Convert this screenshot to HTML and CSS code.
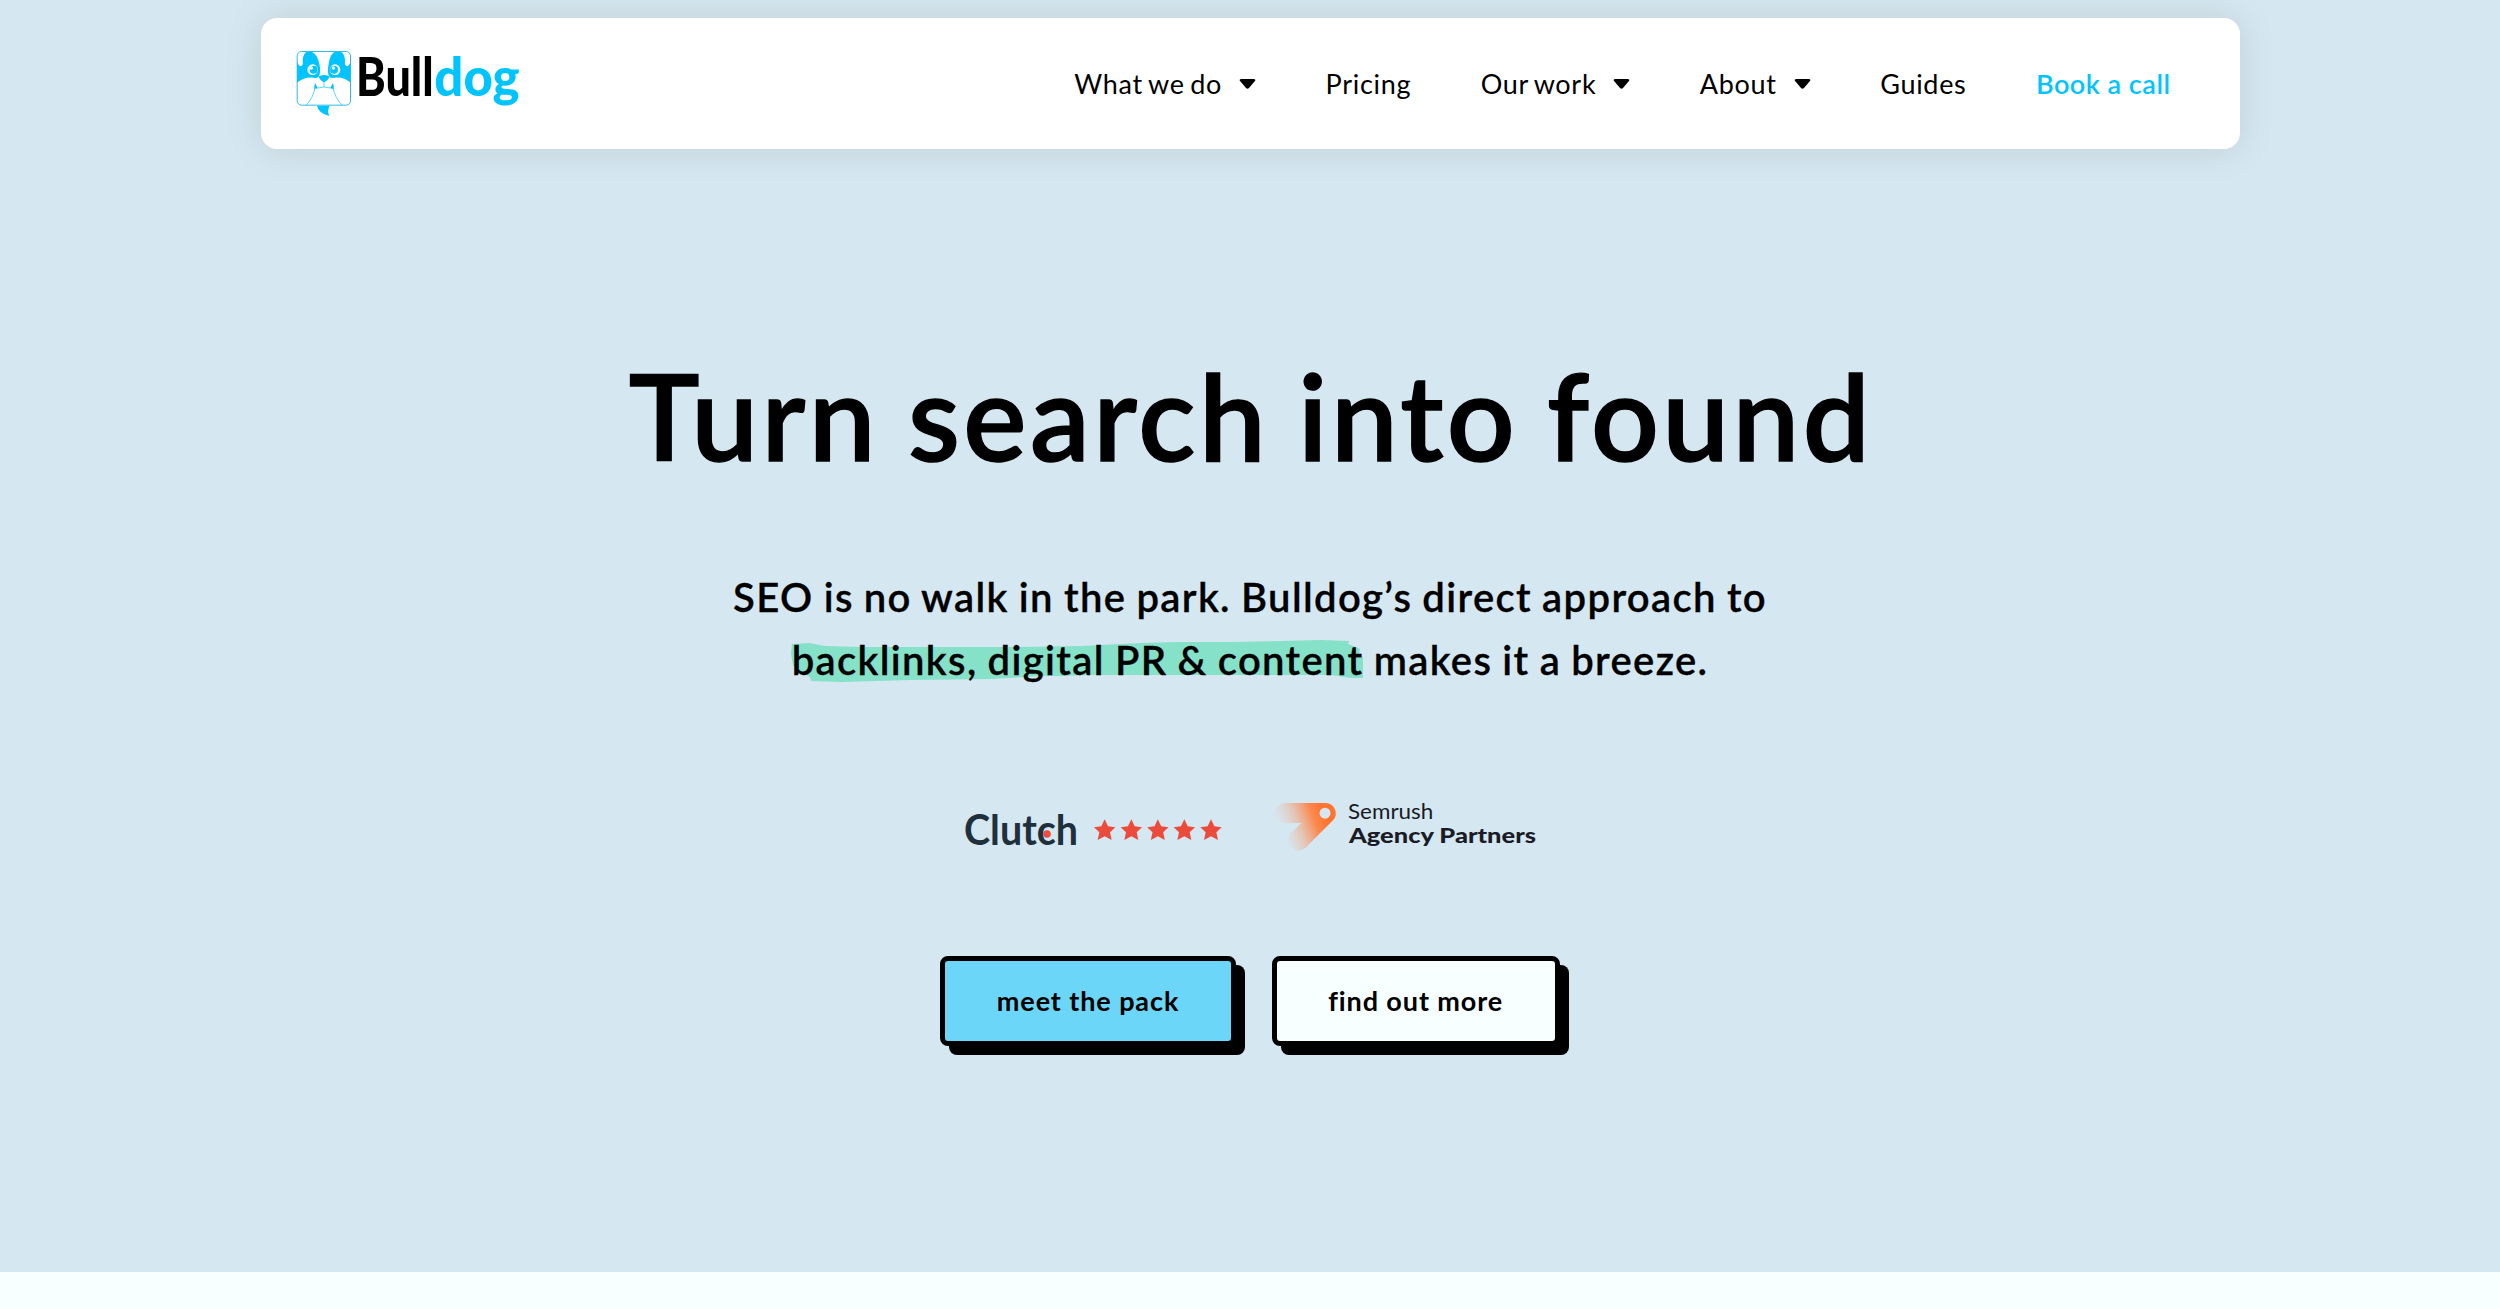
FILE: index.html
```html
<!DOCTYPE html>
<html lang="en">
<head>
    <meta charset="UTF-8">
    <meta name="viewport" content="width=device-width, initial-scale=1.0">
    <title>Bulldog | Turn search into found</title>
    <link rel="stylesheet" href="styles.css">
</head>
<body>
    <div class="hero">
        <header class="navbar">
            <a class="logo" href="#" aria-label="Bulldog">
                <svg viewBox="138 150 675 200" width="225" height="66.67">
                    <!-- dog face -->
                    <clipPath id="face"><rect x="141" y="154" width="161" height="162" rx="13"/></clipPath>
                    <g clip-path="url(#face)">
                        <path fill="#00c4ff" d="M141 184 Q146 201 154 198 Q160 195 158 182 Q158 163 170 155 L185 155 Q202 162 208 192 Q213 215 207 228 Q202 237 192 233 Q162 230 141 248Z"/>
                        <path fill="#00c4ff" d="M302 184 Q297 201 289 198 Q283 195 285 182 Q285 163 273 155 L254 155 Q240 162 236 192 Q231 215 237 228 Q242 236 252 233 Q282 230 302 248Z"/>
                        <path fill="#fff" d="M147 154 Q140 168 145 185 Q149 199 154 194 Q157 178 158 170 Q161 160 167 154ZM296 154 Q303 168 298 185 Q294 199 289 194 Q286 178 285 170 Q282 160 276 154Z"/>
                        <circle cx="188" cy="209" r="16" fill="#fff"/>
                        <circle cx="191" cy="209" r="12" fill="#00c4ff"/>
                        <circle cx="184" cy="204" r="5" fill="#fff"/>
                        <circle cx="255" cy="209" r="16" fill="#fff"/>
                        <circle cx="252" cy="209" r="12" fill="#00c4ff"/>
                        <circle cx="250" cy="204" r="5" fill="#fff"/>
                        <path fill="#fff" d="M204 232 Q222 222 240 232 V262 H204Z"/>
                        <path fill="#00c4ff" d="M206 231 Q208 226 222 225 Q237 226 239 231 Q234 241 224 246 H220 Q210 241 206 231Z"/>
                        <path fill="none" stroke="#00c4ff" stroke-width="2" d="M222 245 V261 M197 265 Q222 257 248 265 M195 263 Q189 295 168 316 M249 263 Q255 295 277 316"/>
                        <path fill="#00c4ff" d="M195 248 L203 264 L192 266ZM249 248 L241 264 L252 266Z"/>
                    </g>
                    <rect x="141.500" y="154.500" width="160" height="161" rx="13" fill="none" stroke="#2fb9e8" stroke-width="3"/>
                    <path fill="#00c4ff" d="M201 317 Q205 340 238 348 Q230 332 239 317Z"/>
                    <text class="logo-text" x="318" y="288" textLength="233" lengthAdjust="spacingAndGlyphs">Bull</text>
                    <text class="logo-text logo-blue" x="553" y="288" textLength="256" lengthAdjust="spacingAndGlyphs">dog</text>
                </svg>
            </a>
            <nav class="nav-links">
                <a href="#">What we do <svg class="caret" viewBox="0 0 16 10"><path d="M1.500 0H14.500Q17 .5 15 2.500L9.500 9Q8 10.500 6.500 9L1 2.500Q-1 .5 1.500 0Z"/></svg></a>
                <a href="#">Pricing</a>
                <a href="#">Our work <svg class="caret" viewBox="0 0 16 10"><path d="M1.500 0H14.500Q17 .5 15 2.500L9.500 9Q8 10.500 6.500 9L1 2.500Q-1 .5 1.500 0Z"/></svg></a>
                <a href="#">About <svg class="caret" viewBox="0 0 16 10"><path d="M1.500 0H14.500Q17 .5 15 2.500L9.500 9Q8 10.500 6.500 9L1 2.500Q-1 .5 1.500 0Z"/></svg></a>
                <a href="#">Guides</a>
                <a class="nav-cta" href="#">Book a call</a>
            </nav>
        </header>

        <h1 class="hero-title">Turn search into found</h1>
        <p class="hero-text">SEO is no walk in the park. Bulldog’s direct approach to<br>
            <span class="highlight"><svg class="marker" viewBox="0 0 572 42" preserveAspectRatio="none"><path d="M1 4 L18 3 L34 6 L70 7 L120 7 L170 7 L230 7 L290 6 L350 3 L390 2 L440 2 L490 1 L530 0 L558 1 L557 4 L565 7 L569 9 L568 14 L572 17 V38 L560 38 L540 35 L480 35 L400 35 L340 35 L300 35 L270 36 L250 36 L200 39 L120 40 L50 42 L20 41 L19 37 L8 31 L2 25 L0 14Z"/></svg>backlinks, digital PR &amp; content</span> makes it a breeze.</p>

        <div class="badges">
            <svg viewBox="40 60 780 156" width="260" height="52">
                <text class="clutch-text" x="43" y="194" textLength="342" lengthAdjust="spacingAndGlyphs">Clutch</text>
                <circle cx="292" cy="162" r="11.500" fill="#f04b3c"/>
                <g fill="#ec4b3b">
                    <path id="star" d="M465 118 L475 139 L497 142 L481 157 L486 180 L465 169 L444 180 L449 157 L433 142 L455 139Z"/>
                    <use href="#star" x="80"/>
                    <use href="#star" x="159.500"/>
                    <use href="#star" x="239"/>
                    <use href="#star" x="319"/>
                </g>
            </svg>
            <svg viewBox="45 60 785 156" width="261.67" height="52">
                <defs>
                    <linearGradient id="flame" gradientUnits="userSpaceOnUse" x1="190" y1="100" x2="65" y2="147">
                        <stop offset="0" stop-color="#ff7530"/>
                        <stop offset=".25" stop-color="#fb8a50"/>
                        <stop offset=".6" stop-color="#e9b9a2" stop-opacity=".8"/>
                        <stop offset="1" stop-color="#e0d6d2" stop-opacity=".2"/>
                    </linearGradient>
                </defs>
                <path fill="url(#flame)" fill-rule="evenodd" d="M75 69 H197 A31 31 0 0 1 219 121 L141 199 Q118 223 96 204 Q76 181 92 160 L124 129 H75 A30 30 0 0 1 75 69Z M195 83 A16.500 16.500 0 1 0 195 116 A16.500 16.500 0 1 0 195 83Z"/>
                <text class="semrush-text" x="264" y="116" textLength="256" lengthAdjust="spacingAndGlyphs">Semrush</text>
                <text class="semrush-text semrush-bold" x="267" y="188" textLength="561" lengthAdjust="spacingAndGlyphs">Agency Partners</text>
            </svg>
        </div>

        <div class="hero-buttons">
            <a class="btn btn-blue" href="#">meet the pack</a>
            <a class="btn btn-light" href="#">find out more</a>
        </div>
    </div>
</body>
</html>
```
FILE: styles.css
```css
* {
    margin: 0;
    padding: 0;
    box-sizing: border-box;
}

body {
    background: #f8ffff;
    color: #000;
    font-family: Lato, "Open Sans", sans-serif;
}

a {
    color: inherit;
    text-decoration: none;
}

.hero {
    display: flex;
    flex-direction: column;
    align-items: center;
    height: 1271.5px;
    padding-top: 17.5px;
    background: #d5e7f0;
}

/* navbar */
.navbar {
    display: flex;
    justify-content: space-between;
    align-items: center;
    width: 1979px;
    height: 131.5px;
    padding: 0 69px 0 35px;
    background: #fff;
    border-radius: 16px;
    box-shadow: 0 0 38px rgba(0, 0, 0, 0.1);
}

.logo svg,
.badges svg {
    display: block;
    overflow: visible;
}

.logo-text {
    font-size: 158px;
    font-weight: 900;
}

.logo-blue {
    fill: #00c4ff;
}

.nav-links {
    display: flex;
    align-items: center;
    gap: 69.5px;
    font-size: 27px;
    letter-spacing: 0.7px;
    word-spacing: -2px;
}

.nav-links a {
    display: flex;
    align-items: center;
    gap: 17px;
}

.nav-links .nav-cta {
    color: #00c4ff;
    font-weight: 600;
    letter-spacing: 0.5px;
    word-spacing: 0;
}

.caret {
    width: 17px;
    height: 10px;
    margin-top: 2px;
}

/* hero */
.hero-title {
    margin-top: 196px;
    font-size: 119px;
    font-weight: 600;
    line-height: 140px;
    letter-spacing: 3.4px;
    word-spacing: -4px;
    text-indent: 2px;
    -webkit-text-stroke: 1.4px #000;
}

.hero-text {
    margin-top: 81px;
    font-size: 40px;
    font-weight: 600;
    line-height: 62.6px;
    letter-spacing: 1.35px;
    word-spacing: -1.2px;
    text-align: center;
    -webkit-text-stroke: 0.3px #000;
}

.highlight {
    position: relative;
    z-index: 0;
}

.marker {
    position: absolute;
    z-index: -1;
    left: -1px;
    top: 4px;
    width: 572px;
    height: 42px;
    fill: #86e1c9;
    stroke: none;
}

.badges {
    display: flex;
    gap: 52px;
    margin-top: 109px;
}

.clutch-text {
    fill: #1f303c;
    font-size: 126px;
    font-weight: 700;
}

.semrush-text {
    fill: #1a1b26;
    font-size: 64px;
}

.semrush-bold {
    font-weight: 900;
}

.hero-buttons {
    display: flex;
    gap: 36px;
    margin-top: 104px;
}

.btn {
    height: 90px;
    padding: 0 51.5px;
    border: 5px solid #000;
    border-radius: 8px;
    box-shadow: 9px 9px 0 #000;
    font-size: 27px;
    font-weight: 700;
    line-height: 79px;
    letter-spacing: 0.9px;
}

.btn-blue {
    background: #6bd6f7;
}

.btn-light {
    background: #f8ffff;
}
```
